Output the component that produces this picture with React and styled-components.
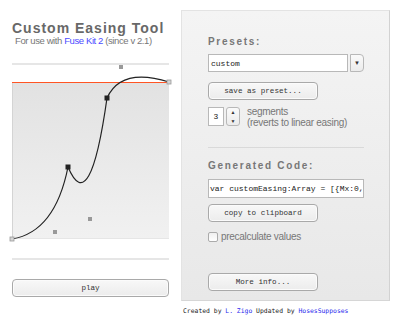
import React from 'react';
import styled, { createGlobalStyle } from 'styled-components';

const GlobalStyle = createGlobalStyle`
  body {
    margin: 0;
    background: #fff;
    font-family: "Liberation Sans", Arial, sans-serif;
  }
`;

const Page = styled.div`
  display: flex;
  gap: 12px;
  padding: 10px 0 0 12px;
  width: 400px;
  height: 321px;
  box-sizing: border-box;
  overflow: hidden;
`;

const LeftCol = styled.div`
  width: 157px;
  display: flex;
  flex-direction: column;
`;

const Title = styled.h1`
  margin: 11px 0 0;
  font-size: 14px;
  line-height: 14px;
  font-weight: bold;
  letter-spacing: 1px;
  color: #686868;
  white-space: nowrap;
`;

const Subtitle = styled.p`
  margin: 0 0 0 3px;
  font-size: 9.5px;
  line-height: 12px;
  letter-spacing: -0.4px;
  color: #777;
  white-space: nowrap;
`;

const Link = styled.a`
  color: ${p => p.$dark ? '#2a2aee' : '#4b4bff'};
  text-decoration: none;
`;

const Rule = styled.div`
  height: ${p => p.$thick ? 2 : 1}px;
  background: ${p => p.$thick ? '#e6e6e6' : '#d9d9d9'};
  margin-top: ${p => p.$top || 0}px;
`;

const Chart = styled.div`
  position: relative;
  height: 193px;
`;

const GraphBox = styled.div`
  margin-top: 17px;
  height: 156px;
  border-top: 1px solid #ff5524;
  background: linear-gradient(#e2e2e2, #f1f1f1);
  box-shadow: inset 1px 0 0 #d4d4d4, inset 0 -1px 0 #e6e6e6;
`;

const Curve = styled.svg`
  position: absolute;
  left: 0;
  top: 0;
  overflow: visible;
`;

const Button = styled.button`
  display: block;
  width: ${p => p.$wide ? '157px' : '110px'};
  height: 18px;
  margin-top: ${p => p.$top || 0}px;
  padding: 0;
  box-sizing: border-box;
  border: 1px solid #a9a9a9;
  border-radius: 4px;
  box-shadow: inset 0 0 0 1px #fbfbfb;
  background: linear-gradient(#f8f8f8, #ececec);
  font-family: "Liberation Mono", "Courier New", monospace;
  font-size: 7.6px;
  font-weight: normal;
  color: #333;
  cursor: pointer;
`;

const RightCol = styled.div`
  width: 209px;
  display: flex;
  flex-direction: column;
`;

const Panel = styled.div`
  height: 291px;
  box-sizing: border-box;
  padding: 25px 25px 0 26px;
  background: linear-gradient(#f4f4f4, #e8e8e8);
  border: 1px solid #e3e3e3;
  border-right-color: #d2d2d2;
  border-bottom-color: #d6d6d6;
  display: flex;
  flex-direction: column;
`;

const Label = styled.div`
  margin-top: ${p => p.$top || 0}px;
  font-size: 10px;
  line-height: 12px;
  font-weight: bold;
  letter-spacing: 1.7px;
  color: #777;
`;

const SelectRow = styled.div`
  display: flex;
  gap: 2px;
  margin-top: 6px;
  height: 18px;
`;

const Field = styled.div`
  flex: ${p => p.$fixed ? '0 0 16px' : '1'};
  box-sizing: border-box;
  height: ${p => p.$fixed ? 19 : 18}px;
  padding: 0 ${p => p.$fixed ? 0 : 2}px;
  display: flex;
  align-items: center;
  justify-content: ${p => p.$fixed ? 'center' : 'flex-start'};
  background: #fff;
  border: 1px solid #b8b8b8;
  font-family: "Liberation Mono", "Courier New", monospace;
  font-size: 8px;
  color: #222;
  white-space: nowrap;
  overflow: hidden;
`;

const DropButton = styled.div`
  width: 14px;
  box-sizing: border-box;
  border: 1px solid #b8b8b8;
  border-radius: 0 4px 4px 0;
  background: linear-gradient(#fafafa, #ececec);
  display: flex;
  align-items: center;
  justify-content: center;
  font-size: 6px;
  color: #333;
`;

const StepRow = styled.div`
  display: flex;
  margin-top: 7px;
  align-items: flex-start;
`;

const Spinner = styled.div`
  width: 14px;
  height: 19px;
  margin-left: 2px;
  box-sizing: border-box;
  border: 1px solid #b8b8b8;
  border-radius: 3px;
  background: linear-gradient(#fafafa, #ececec);
  display: flex;
  flex-direction: column;
  align-items: center;
  justify-content: space-around;
  font-size: 5px;
  line-height: 6px;
  color: #333;
`;

const Hint = styled.div`
  margin-left: 7px;
  font-size: 10px;
  line-height: 10.5px;
  letter-spacing: -0.3px;
  color: #777;
  white-space: nowrap;
`;

const CodeField = styled(Field)`
  flex: none;
  margin-top: 7px;
  height: 19px;
  padding: 0 1px;
`;

const CheckRow = styled.label`
  display: flex;
  align-items: center;
  gap: 3px;
  margin-top: 9px;
  font-size: 10px;
  letter-spacing: -0.3px;
  color: #777;
`;

const Box = styled.span`
  width: 10px;
  height: 10px;
  box-sizing: border-box;
  border: 1px solid #ababab;
  border-radius: 2px;
  background: linear-gradient(#f0f0f0, #fff);
`;

const Footer = styled.div`
  margin: 6px 0 0 2px;
  font-family: "DejaVu Sans Mono", "Liberation Mono", monospace;
  font-size: 6.4px;
  line-height: 8px;
  color: #222;
  white-space: nowrap;
`;

const pts = {
  start: [0, 174],
  c1: [43, 167],
  p1: [56, 102],
  c2: [78, 154],
  p2: [95, 33],
  c3: [109, 2],
  end: [157, 17],
};

function Square({ at, size, fill, stroke }) {
  return (
    <rect
      x={at[0] - size / 2}
      y={at[1] - size / 2}
      width={size}
      height={size}
      fill={fill}
      stroke={stroke}
      strokeWidth={stroke ? 0.8 : 0}
    />
  );
}

function EasingChart() {
  const { start, c1, p1, c2, p2, c3, end } = pts;
  const d = `M${start} Q${c1} ${p1} Q${c2} ${p2} Q${c3} ${end}`;
  return (
    <Chart>
      <GraphBox />
      <Curve width="157" height="193" viewBox="0 0 157 193">
        <path d={d} fill="none" stroke="#222" strokeWidth="1.2" />
        <Square at={c1} size={4} fill="#999" />
        <Square at={c2} size={4} fill="#999" />
        <Square at={c3} size={4} fill="#999" />
        <Square at={p1} size={5} fill="#222" />
        <Square at={p2} size={5} fill="#222" />
        <Square at={start} size={4} fill="#d6d6d6" stroke="#999" />
        <Square at={end} size={4} fill="#d6d6d6" stroke="#999" />
      </Curve>
    </Chart>
  );
}

export default function App() {
  return (
    <Page>
      <GlobalStyle />
      <LeftCol>
        <Title>Custom Easing Tool</Title>
        <Subtitle>
          For use with <Link href="#">Fuse Kit 2</Link> (since v 2.1)
        </Subtitle>
        <Rule $thick $top={16} />
        <EasingChart />
        <Rule $thick />
        <Button $wide $top={19}>play</Button>
      </LeftCol>
      <RightCol>
        <Panel>
          <Label>Presets:</Label>
          <SelectRow>
            <Field>custom</Field>
            <DropButton>▼</DropButton>
          </SelectRow>
          <Button $top={10}>save as preset...</Button>
          <StepRow>
            <Field $fixed>3</Field>
            <Spinner>
              <span>▲</span>
              <span>▼</span>
            </Spinner>
            <Hint>
              segments<br />(reverts to linear easing)
            </Hint>
          </StepRow>
          <Rule $top={19} />
          <Label $top={12}>Generated Code:</Label>
          <CodeField>var customEasing:Array = [{'{'}Mx:0,</CodeField>
          <Button $top={6}>copy to clipboard</Button>
          <CheckRow>
            <Box />
            precalculate values
          </CheckRow>
          <Button $top={31}>More info...</Button>
        </Panel>
        <Footer>
          Created by <Link $dark href="#">L. Zigo</Link> Updated by <Link $dark href="#">HosesSupposes</Link>
        </Footer>
      </RightCol>
    </Page>
  );
}
